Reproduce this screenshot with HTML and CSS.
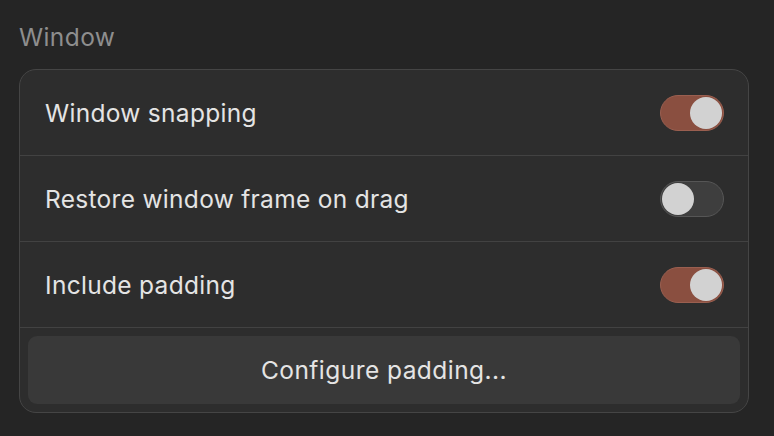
FILE: index.html
```
<!DOCTYPE html>
<html>
<head>
<meta charset="utf-8">
<link rel="stylesheet" href="styles.css">
</head>
<body>
<div class="page">
  <div class="section-title">Window</div>
  <div class="card">
    <div class="row">
      <span class="label">Window snapping</span>
      <span class="toggle on"><span class="knob"></span></span>
    </div>
    <div class="row">
      <span class="label">Restore window frame on drag</span>
      <span class="toggle off"><span class="knob"></span></span>
    </div>
    <div class="row">
      <span class="label">Include padding</span>
      <span class="toggle on"><span class="knob"></span></span>
    </div>
    <div class="button-row">
      <div class="button">Configure padding...</div>
    </div>
  </div>
</div>
</body>
</html>
```
FILE: styles.css
```
html, body {
  margin: 0;
  padding: 0;
  background: #252525;
}
body {
  width: 774px;
  height: 436px;
  overflow: hidden;
  font-family: Inter, "Noto Sans", sans-serif;
  -webkit-font-smoothing: antialiased;
}
.page {
  padding: 22px 25px 0 19px;
}
.section-title {
  font-size: 24.5px;
  line-height: 30px;
  letter-spacing: 0.4px;
  color: #8e8e8e;
  height: 47px;
}
.card {
  border: 1px solid #454545;
  border-radius: 17px;
  background: #2d2d2d;
  overflow: hidden;
}
.row {
  height: 85px;
  border-bottom: 1px solid #424242;
  display: flex;
  align-items: center;
  justify-content: space-between;
  padding: 0 24px 0 25px;
}
.label {
  font-size: 24.5px;
  letter-spacing: 0.3px;
  color: #e4e4e4;
}
.toggle {
  width: 64px;
  height: 36px;
  border-radius: 18px;
  box-sizing: border-box;
  display: flex;
  align-items: center;
  padding: 0 1px;
}
.toggle.on {
  background: #8a4f40;
  border: 1px solid #9a5f50;
  justify-content: flex-end;
}
.toggle.off {
  background: #3e3e3e;
  border: 1px solid #565656;
  justify-content: flex-start;
}
.knob {
  width: 32px;
  height: 32px;
  border-radius: 50%;
  background: #d2d2d2;
}
.button-row {
  padding: 8px;
}
.button {
  height: 68px;
  border-radius: 9px;
  background: #393939;
  display: flex;
  align-items: center;
  justify-content: center;
  font-size: 24.5px;
  letter-spacing: 0.45px;
  color: #e4e4e4;
}
```
